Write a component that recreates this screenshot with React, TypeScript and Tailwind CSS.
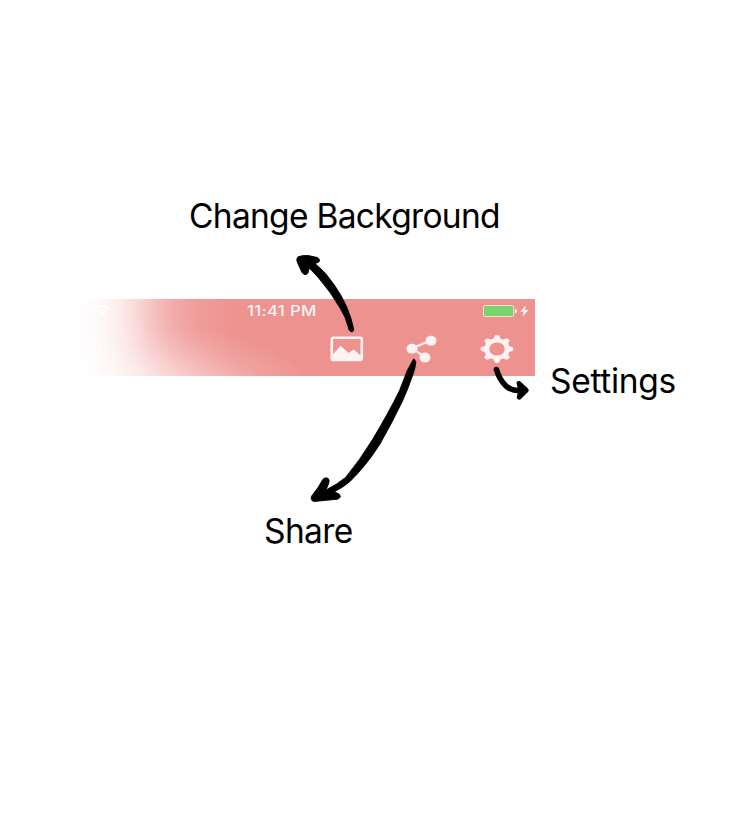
const polar = (r: number, deg: number) => {
  const a = (deg * Math.PI) / 180;
  return `${(r * Math.sin(a)).toFixed(2)} ${(-r * Math.cos(a)).toFixed(2)}`;
};

// Eight rounded teeth joined by shallow concave valleys.
const gearPath =
  Array.from({ length: 8 }, (_, i) => {
    const a = i * 45;
    return `${i === 0 ? "M" : "L"}${polar(11.1, a - 14)}L${polar(13.4, a - 9)}Q${polar(14.8, a)} ${polar(13.4, a + 9)}L${polar(11.1, a + 14)}Q${polar(10.4, a + 22.5)} ${polar(11.1, a + 31)}`;
  }).join("") + "ZM0 -6.6A6.6 6.6 0 1 0 0 6.6A6.6 6.6 0 1 0 0 -6.6Z";

function WifiIcon() {
  return (
    <svg width="16" height="12" viewBox="0 0 16 12" fill="none" stroke="#fff" strokeWidth="2">
      <path d="M.7 4.2Q8-2.2 15.3 4.2M3.4 7Q8 3 12.6 7" />
      <path d="M8 11 5.6 9Q8 7 10.4 9Z" fill="#fff" stroke="none" />
    </svg>
  );
}

function StatusBar() {
  return (
    <div className="flex h-6 items-center pl-[32px] text-white">
      <WifiIcon />
      <span className="ml-[137px] w-[70px] origin-left scale-x-[1.2] whitespace-nowrap text-[14px] font-medium leading-6 tracking-[0.25px] text-[#fff5f5]">
        11:41 PM
      </span>
      <svg className="ml-[166px] shrink-0" width="46" height="14" viewBox="0 0 46 14">
        <rect x=".5" y="1.5" width="30.2" height="11" rx="1.4" fill="#79d66f" stroke="#ffdccb" />
        <path d="M32 4.8Q34 5 34 7T32 9.2Z" fill="#fff2ef" />
        <path d="M42.7 1.3 37.4 7.8H40.5L39.6 12.6 45.4 6.1H42.1Z" fill="#fff5f5" />
      </svg>
    </div>
  );
}

function ImageIcon() {
  return (
    <svg width="34" height="26" viewBox="0 0 34 26">
      <rect x="1.8" y="1.8" width="30" height="22.2" rx="1.4" fill="none" stroke="#fff2f2" strokeWidth="2.6" />
      <path d="M3 18.2 10.6 9.8 18.5 17 23.8 13.4 31 19.8V23.5H3Z" fill="#fff2f2" />
    </svg>
  );
}

function ShareIcon() {
  return (
    <svg width="32" height="28" viewBox="0 0 32 28" fill="#fff2f2">
      <path d="M24.8 5.5 6 13.3 19 22" fill="none" stroke="#fff2f2" strokeWidth="2.2" />
      <ellipse cx="25" cy="5.8" rx="5.5" ry="5" />
      <ellipse cx="6" cy="13.7" rx="5.5" ry="5" />
      <ellipse cx="19" cy="22.6" rx="5.5" ry="5" />
    </svg>
  );
}

function GearIcon() {
  return (
    <svg width="34" height="30" viewBox="-14.5 -15 29 30" preserveAspectRatio="none">
      <path d={gearPath} fill="#fff2f2" fillRule="evenodd" />
    </svg>
  );
}

function Arrows() {
  return (
    <svg
      className="pointer-events-none absolute left-0 top-0"
      width="750"
      height="839"
      viewBox="0 0 750 839"
      fill="#000"
      stroke="#000"
      strokeLinejoin="round"
      strokeLinecap="round"
    >
      <path d="M298 257Q301 255 308 255.5L317.5 257.5Q321.5 260.5 318 262.5L315 263.5Q326 272 335 286Q349 306 353.8 329.5Q353.2 332.7 350.6 331.5Q348.8 331 348.2 327Q345.8 317 340 308Q330 291 319 278.5Q312.5 271 309.2 268.2L308 273Q305 276.5 302 272.5L297.2 262Q296 258.5 298 257Z" strokeWidth=".9" />
      <path d="M413.6 359Q414 358.2 414.5 360L415.8 361.2Q415.8 367 412 377Q408 389 402.5 401Q392 423 380 444Q366 466 350 481.5Q343 487.5 334.5 491.7L339.2 494.2Q342 497.5 337.5 499.2L326 500.3L314 501.5Q310 500.5 311.7 496L318 487.5L322.5 480Q324 477 327.5 478Q330 479.5 328.8 483L326 490Q337 484.5 345.5 477.5Q360 460 372.5 439.5Q389 412 399.5 390.5L407.5 370Z" strokeWidth=".9" />
      <path d="M496.4 369.5Q499.5 380 506.5 386.5Q513.5 392 524 390.2" fill="none" strokeWidth="5.6" />
      <path d="M519 383.4 526.3 390.3 519.2 397.2 520.8 390.3Z" strokeWidth="4.8" />
    </svg>
  );
}

export default function App() {
  return (
    <main className="relative h-[839px] w-[750px] overflow-hidden bg-white pt-[196px] font-['Inter','Liberation_Sans',sans-serif] text-[33.5px] leading-10 text-black">
      <h1 className="ml-[189px] w-fit whitespace-nowrap tracking-[-0.7px]">Change Background</h1>

      <section className="mt-[63px] flex h-[77px]">
        <div className="ml-[62px] w-[473px] shrink-0 bg-[radial-gradient(ellipse_190px_75px_at_68px_98px,rgba(255,255,255,0.6)_0%,rgba(255,255,255,0.48)_35%,rgba(255,255,255,0.15)_72%,rgba(255,255,255,0)_100%),linear-gradient(90deg,#fff_8px,#fffbfb_32px,#fdefee_54px,#f9dad8_74px,#f5bfbe_93px,#f2aaa8_113px,#ef9c99_138px,#ee9490_170px,#ed928e_230px)]">
          <StatusBar />
          <div className="flex h-[51px] items-center justify-end gap-[42px] pr-[21px]">
            <ImageIcon />
            <ShareIcon />
            <GearIcon />
          </div>
        </div>
        <p className="ml-[15px] mt-[62px] whitespace-nowrap tracking-[-0.3px]">Settings</p>
      </section>

      <p className="ml-[264px] mt-[135px] w-fit tracking-[-0.6px]">Share</p>
      <Arrows />
    </main>
  );
}
